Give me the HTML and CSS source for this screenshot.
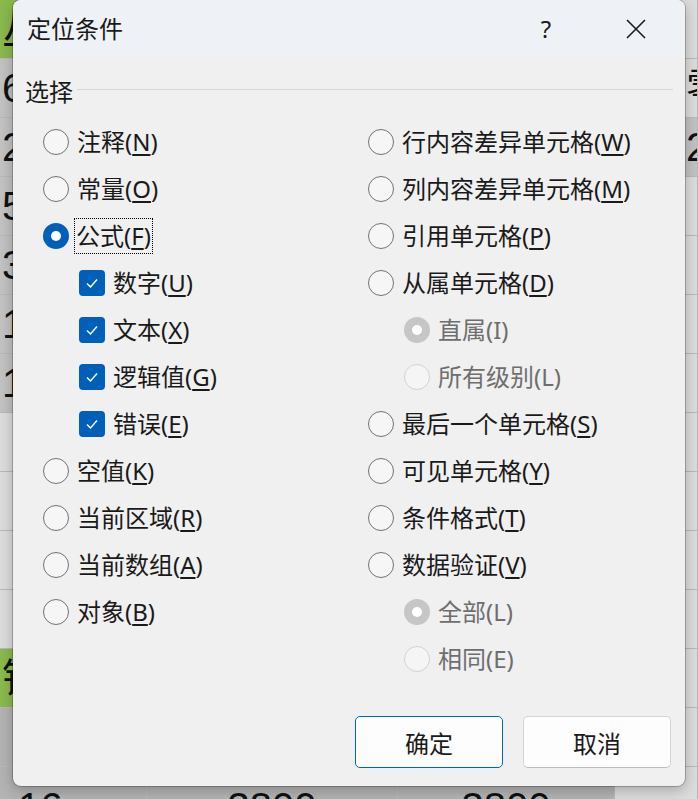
FILE: index.html
```html
<!DOCTYPE html>
<html lang="zh-CN">

<head>
    <meta charset="UTF-8">
    <meta name="viewport" content="width=device-width, initial-scale=1.0">
    <title>定位条件</title>
    <link rel="stylesheet" href="styles.css">
</head>

<body>
    <!-- 背后的工作表 -->
    <div class="sheet">
        <div class="row"><div class="cell c1 green">丛</div><div class="cell c2"></div><div class="cell c3"></div><div class="cell c4 light"></div></div>
        <div class="row"><div class="cell c1 dark">6</div><div class="cell c2"></div><div class="cell c3"></div><div class="cell c4 light">零</div></div>
        <div class="row"><div class="cell c1 dark">2</div><div class="cell c2"></div><div class="cell c3"></div><div class="cell c4 dark">2</div></div>
        <div class="row"><div class="cell c1 dark">5</div><div class="cell c2"></div><div class="cell c3"></div><div class="cell c4 light"></div></div>
        <div class="row"><div class="cell c1 dark">3</div><div class="cell c2"></div><div class="cell c3"></div><div class="cell c4 light"></div></div>
        <div class="row"><div class="cell c1 dark">1</div><div class="cell c2"></div><div class="cell c3"></div><div class="cell c4 light"></div></div>
        <div class="row"><div class="cell c1 dark">1</div><div class="cell c2"></div><div class="cell c3"></div><div class="cell c4 light"></div></div>
        <div class="row"><div class="cell c1 light"></div><div class="cell c2"></div><div class="cell c3"></div><div class="cell c4 light"></div></div>
        <div class="row"><div class="cell c1 light"></div><div class="cell c2"></div><div class="cell c3"></div><div class="cell c4 light"></div></div>
        <div class="row"><div class="cell c1 light"></div><div class="cell c2"></div><div class="cell c3"></div><div class="cell c4 light"></div></div>
        <div class="row"><div class="cell c1 light"></div><div class="cell c2"></div><div class="cell c3"></div><div class="cell c4 light"></div></div>
        <div class="row"><div class="cell c1 green">钱</div><div class="cell c2"></div><div class="cell c3"></div><div class="cell c4 light"></div></div>
        <div class="row"><div class="cell c1 mid"></div><div class="cell c2"></div><div class="cell c3"></div><div class="cell c4 light"></div></div>
        <div class="row"><div class="cell c1 mid num">16</div><div class="cell c2 mid num">3800</div><div class="cell c3 mid num">3800</div><div class="cell c4 light"></div></div>
    </div>

    <!-- 对话框 -->
    <div class="dialog">
        <div class="titlebar">
            <span class="title">定位条件</span>
            <span class="help">?</span>
            <span class="close">
                <svg width="20" height="20" viewBox="0 0 20 20">
                    <path d="M1 1 L19 19 M19 1 L1 19" stroke="#1a1a1a" stroke-width="1.6" fill="none" />
                </svg>
            </span>
        </div>

        <div class="body">
            <div class="group">
                <span class="group-label">选择</span>
                <span class="group-line"></span>
            </div>

            <div class="options">
                <div class="col">
                    <div class="opt"><span class="radio"></span><span class="text">注释(<u>N</u>)</span></div>
                    <div class="opt"><span class="radio"></span><span class="text">常量(<u>O</u>)</span></div>
                    <div class="opt"><span class="radio on"></span><span class="text focus">公式(<u>F</u>)</span></div>
                    <div class="opt sub"><span class="check"><svg width="26" height="26" viewBox="0 0 26 26"><path d="M8 13.5 L11.5 17 L18 9.5" stroke="#fff" stroke-width="1.5" fill="none" /></svg></span><span class="text">数字(<u>U</u>)</span></div>
                    <div class="opt sub"><span class="check"><svg width="26" height="26" viewBox="0 0 26 26"><path d="M8 13.5 L11.5 17 L18 9.5" stroke="#fff" stroke-width="1.5" fill="none" /></svg></span><span class="text">文本(<u>X</u>)</span></div>
                    <div class="opt sub"><span class="check"><svg width="26" height="26" viewBox="0 0 26 26"><path d="M8 13.5 L11.5 17 L18 9.5" stroke="#fff" stroke-width="1.5" fill="none" /></svg></span><span class="text">逻辑值(<u>G</u>)</span></div>
                    <div class="opt sub"><span class="check"><svg width="26" height="26" viewBox="0 0 26 26"><path d="M8 13.5 L11.5 17 L18 9.5" stroke="#fff" stroke-width="1.5" fill="none" /></svg></span><span class="text">错误(<u>E</u>)</span></div>
                    <div class="opt"><span class="radio"></span><span class="text">空值(<u>K</u>)</span></div>
                    <div class="opt"><span class="radio"></span><span class="text">当前区域(<u>R</u>)</span></div>
                    <div class="opt"><span class="radio"></span><span class="text">当前数组(<u>A</u>)</span></div>
                    <div class="opt"><span class="radio"></span><span class="text">对象(<u>B</u>)</span></div>
                </div>
                <div class="col">
                    <div class="opt"><span class="radio"></span><span class="text">行内容差异单元格(<u>W</u>)</span></div>
                    <div class="opt"><span class="radio"></span><span class="text">列内容差异单元格(<u>M</u>)</span></div>
                    <div class="opt"><span class="radio"></span><span class="text">引用单元格(<u>P</u>)</span></div>
                    <div class="opt"><span class="radio"></span><span class="text">从属单元格(<u>D</u>)</span></div>
                    <div class="opt sub disabled"><span class="radio on"></span><span class="text">直属(I)</span></div>
                    <div class="opt sub disabled"><span class="radio"></span><span class="text">所有级别(L)</span></div>
                    <div class="opt"><span class="radio"></span><span class="text">最后一个单元格(<u>S</u>)</span></div>
                    <div class="opt"><span class="radio"></span><span class="text">可见单元格(<u>Y</u>)</span></div>
                    <div class="opt"><span class="radio"></span><span class="text">条件格式(<u>T</u>)</span></div>
                    <div class="opt"><span class="radio"></span><span class="text">数据验证(<u>V</u>)</span></div>
                    <div class="opt sub disabled"><span class="radio on"></span><span class="text">全部(L)</span></div>
                    <div class="opt sub disabled"><span class="radio"></span><span class="text">相同(E)</span></div>
                </div>
            </div>

            <div class="buttons">
                <button class="btn primary">确定</button>
                <button class="btn">取消</button>
            </div>
        </div>
    </div>
</body>

</html>
```

FILE: styles.css
```css
* {
    margin: 0px;
    padding: 0px;
    box-sizing: border-box;
}

body {
    width: 698px;
    height: 799px;
    overflow: hidden;
    position: relative;
    background-color: #b0b0b0;
    font-family: "Noto Sans", "Noto Sans CJK SC", sans-serif;
}

/* 工作表 */
.sheet {
    display: flex;
    flex-direction: column;
}

.sheet .row {
    display: flex;
    height: 59px;
}

.sheet .cell {
    border-right: 1px solid #b8b8b8;
    border-bottom: 1px solid #b8b8b8;
    font-family: "Liberation Sans", "Noto Sans CJK SC", sans-serif;
    font-size: 40px;
    line-height: 58px;
    color: #111;
    overflow: hidden;
    white-space: nowrap;
    background-color: #d9d9d9;
}

.sheet .c1 {
    width: 147px;
    padding-left: 2px;
}

.sheet .c2 {
    width: 251px;
}

.sheet .c3 {
    width: 217px;
}

.sheet .c4 {
    width: 83px;
    padding-left: 71px;
}

.sheet .num {
    text-align: center;
    padding-left: 0;
    line-height: 80px;
}

.sheet .c1.num {
    text-align: left;
    padding-left: 18px;
}

.sheet .green {
    background-color: #8ab94e;
}

.sheet .dark {
    background-color: #c2c2c2;
}

.sheet .light {
    background-color: #dcdcdc;
}

.sheet .mid {
    background-color: #b3b3b3;
}

/* 对话框 */
.dialog {
    position: absolute;
    left: 13px;
    top: 0px;
    width: 672px;
    height: 786px;
    background-color: #f0f0f0;
    border-radius: 8px;
    box-shadow: 0 0 0 1px rgba(0, 0, 0, 0.22), 0 4px 14px rgba(0, 0, 0, 0.25);
    overflow: hidden;
    display: flex;
    flex-direction: column;
    color: #1a1a1a;
}

.titlebar {
    height: 58px;
    background-color: #eef2f7;
    display: flex;
    align-items: center;
    padding-left: 14px;
}

.title {
    font-size: 24px;
    line-height: 30px;
    flex: 1;
}

.help {
    width: 46px;
    text-align: center;
    font-size: 24px;
    line-height: 30px;
    font-family: "Noto Sans", sans-serif;
}

.close {
    width: 46px;
    margin-left: 44px;
    margin-right: 26px;
    display: flex;
    justify-content: center;
    align-items: center;
}

.body {
    flex: 1;
    display: flex;
    flex-direction: column;
    padding: 20px 12px 18px 12px;
}

.group {
    display: flex;
    height: 28px;
}

.group-label {
    font-size: 24px;
    line-height: 28px;
    padding-right: 4px;
}

.group-line {
    flex: 1;
    height: 1px;
    margin-top: 11px;
    background-color: #d6d6d6;
}

.options {
    display: grid;
    grid-template-columns: 325px 1fr;
    margin-top: 12px;
    padding-left: 18px;
}

.opt {
    height: 47px;
    display: flex;
    align-items: center;
    gap: 8px;
    font-size: 24px;
    line-height: 28px;
}

.opt.sub {
    padding-left: 36px;
}

.opt u {
    text-decoration-thickness: 1.5px;
    text-underline-offset: 3px;
}

.opt .focus {
    outline: 1px dotted #000;
    padding: 3px 1px;
    margin-left: -2px;
}

.radio {
    width: 26px;
    height: 26px;
    border-radius: 50%;
    border: 1.5px solid #727272;
    background-color: #f6f6f6;
    flex-shrink: 0;
    display: flex;
    justify-content: center;
    align-items: center;
}

.radio.on {
    border: none;
    background-color: #005fb8;
}

.radio.on::after {
    content: "";
    width: 10px;
    height: 10px;
    border-radius: 50%;
    background-color: #fff;
}

.check {
    width: 26px;
    height: 26px;
    border-radius: 4px;
    background-color: #005fb8;
    flex-shrink: 0;
    display: flex;
}

.disabled {
    color: #6e6e6e;
}

.disabled .radio {
    border: 1.5px solid #d2d2d2;
    background-color: #f5f5f5;
}

.disabled .radio.on {
    border: none;
    background-color: #c6c6c6;
}

.buttons {
    margin-top: auto;
    display: flex;
    justify-content: flex-end;
    gap: 20px;
    padding-right: 2px;
}

.btn {
    width: 148px;
    height: 52px;
    font-family: "Noto Sans", "Noto Sans CJK SC", sans-serif;
    font-size: 24px;
    color: #1a1a1a;
    background-color: #fdfdfd;
    border: 1px solid #d4d4d4;
    border-bottom-color: #bdbdbd;
    border-radius: 5px;
}

.btn.primary {
    border: 1.5px solid #0067c0;
}
```
